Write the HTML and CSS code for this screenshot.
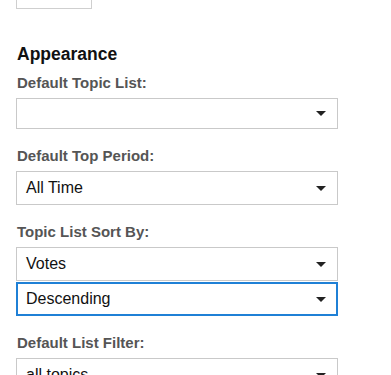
FILE: index.html
```html
<!DOCTYPE html>
<html lang="en">
<head>
    <meta charset="UTF-8">
    <meta name="viewport" content="width=device-width, initial-scale=1.0">
    <title>Preferences</title>
    <link rel="stylesheet" href="styles.css">
</head>
<body>
    <div class="prev-control"></div>

    <h2 class="section-title">Appearance</h2>

    <div class="field">
        <label class="field-label">Default Topic List:</label>
        <div class="select empty"><span class="select-value"></span><span class="caret"></span></div>
    </div>

    <div class="field">
        <label class="field-label">Default Top Period:</label>
        <div class="select"><span class="select-value">All Time</span><span class="caret"></span></div>
    </div>

    <div class="field">
        <label class="field-label">Topic List Sort By:</label>
        <div class="select"><span class="select-value">Votes</span><span class="caret"></span></div>
        <div class="select focused"><span class="select-value">Descending</span><span class="caret"></span></div>
    </div>

    <div class="field">
        <label class="field-label">Default List Filter:</label>
        <div class="select"><span class="select-value">all topics</span><span class="caret"></span></div>
    </div>
</body>
</html>
```

FILE: styles.css
```css
* {
    margin: 0;
    padding: 0;
    box-sizing: border-box;
}

html, body {
    background: #fff;
    overflow: hidden;
}

body {
    font-family: "Liberation Sans", Arial, Helvetica, sans-serif;
    padding: 0 53px 0 16px;
    color: #222;
}

.prev-control {
    width: 76px;
    height: 31px;
    margin-top: -22px;
    border: 1px solid #cfcfcf;
}

.section-title {
    font-size: 17.5px;
    line-height: 20px;
    font-weight: bold;
    color: #111;
    margin: 35px 0 10px 1px;
}

.field {
    margin-bottom: 18px;
}

.field-label {
    display: block;
    font-size: 15px;
    line-height: 18px;
    font-weight: bold;
    color: #555;
    margin: 0 0 6px 1px;
}

.select {
    display: flex;
    align-items: center;
    height: 34px;
    padding: 0 11px 0 9px;
    border: 1px solid #c9c9c9;
    font-size: 16px;
    color: #111;
}

.select + .select {
    margin-top: 1px;
}

.select.empty {
    height: 31px;
}

.select.focused {
    border-color: #1f80d6;
    box-shadow: inset 0 0 0 1px #1f80d6;
}

.select-value {
    flex: 1;
}

.caret {
    width: 0;
    height: 0;
    border-left: 5px solid transparent;
    border-right: 5px solid transparent;
    border-top: 5px solid #222;
}
```
